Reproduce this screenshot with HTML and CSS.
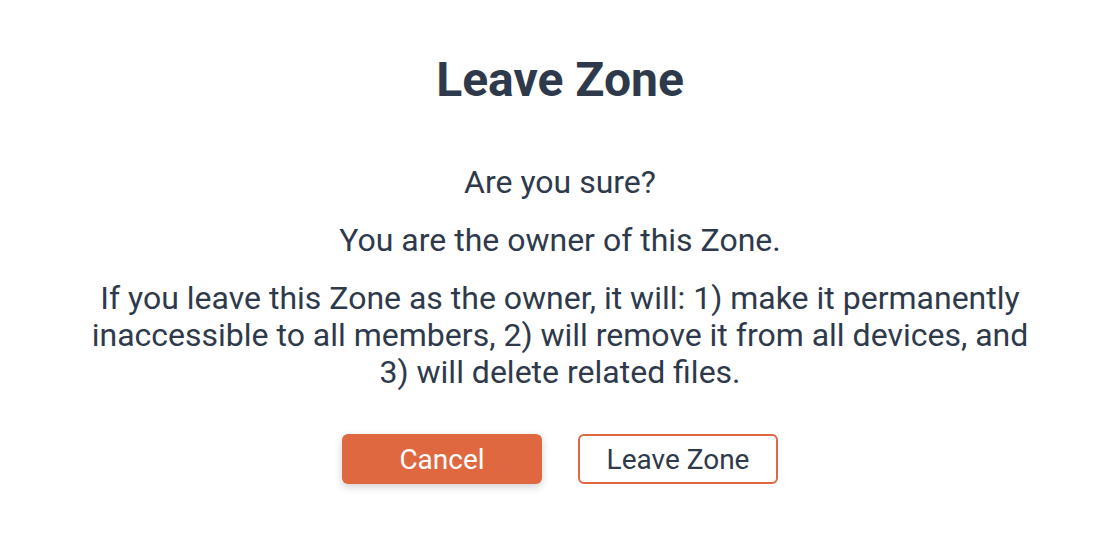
FILE: index.html
```html
<!DOCTYPE html>
<html>
<head>
<meta charset="utf-8">
<link rel="stylesheet" href="styles.css">
</head>
<body>
<div class="dialog">
  <h1 class="title">Leave Zone</h1>
  <p class="line q">Are you sure?</p>
  <p class="line">You are the owner of this Zone.</p>
  <p class="line desc">If you leave this Zone as the owner, it will: 1) make it permanently inaccessible to all members, 2) will remove it from all devices, and 3) will delete related files.</p>
  <div class="actions">
    <button class="btn primary">Cancel</button>
    <button class="btn outline">Leave Zone</button>
  </div>
</div>
</body>
</html>
```

FILE: styles.css
```css
html, body {
  margin: 0;
  padding: 0;
  background: #ffffff;
}
body {
  width: 1120px;
  height: 536px;
  font-family: Roboto, "Liberation Sans", sans-serif;
  color: #2e3a4b;
}
.dialog {
  display: flex;
  flex-direction: column;
  align-items: center;
  padding-top: 52px;
}
.title {
  margin: 0;
  font-size: 48px;
  font-weight: 700;
  line-height: 56px;
}
.line {
  margin: 0;
  font-size: 32px;
  line-height: 37px;
  text-align: center;
}
.q { margin-top: 56px; }
.line + .line { margin-top: 21px; }
.desc { width: 948px; }
.actions {
  display: flex;
  gap: 36px;
  margin-top: 43px;
}
.btn {
  width: 200px;
  height: 50px;
  border-radius: 6px;
  font-family: Roboto, "Liberation Sans", sans-serif;
  font-size: 28px;
  cursor: pointer;
}
.primary {
  background: #e06840;
  color: #ffffff;
  border: none;
  box-shadow: 0 3px 8px rgba(0, 0, 0, 0.18);
}
.outline {
  background: #ffffff;
  color: #2e3a4b;
  border: 2px solid #e06840;
}
```
